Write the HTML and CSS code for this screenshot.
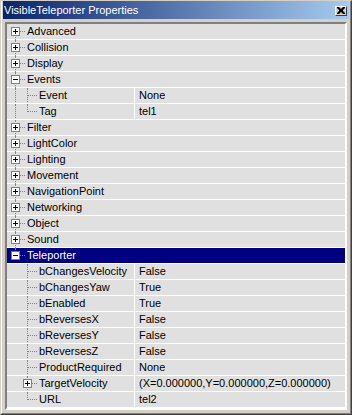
FILE: index.html
```html
<!DOCTYPE html>
<html lang="en">
<head>
    <meta charset="UTF-8">
    <title>VisibleTeleporter Properties</title>
    <link rel="stylesheet" href="styles.css">
</head>
<body>
    <div class="window">
        <div class="frame">
            <div class="titlebar">
                <span class="title">VisibleTeleporter Properties</span>
                <button class="close-btn" title="Close">
                    <svg width="8" height="7" viewBox="0 0 8 7">
                        <path d="M0 0h2l2 2 2-2h2v1l-2 2v1l2 2v1h-2l-2-2-2 2h-2v-1l2-2v-1l-2-2z" fill="#000"/>
                    </svg>
                </button>
            </div>

            <div class="props">
                <div class="row cat"><span class="node first"><i class="box plus"></i></span><span class="label">Advanced</span></div>
                <div class="row cat"><span class="node mid"><i class="box plus"></i></span><span class="label">Collision</span></div>
                <div class="row cat"><span class="node mid"><i class="box plus"></i></span><span class="label">Display</span></div>
                <div class="row cat"><span class="node mid"><i class="box"></i></span><span class="label">Events</span></div>
                <div class="row"><span class="name"><span class="seg pipe"></span><span class="node mid"></span><span class="label">Event</span></span><span class="value">None</span></div>
                <div class="row"><span class="name"><span class="seg pipe"></span><span class="node last"></span><span class="label">Tag</span></span><span class="value">tel1</span></div>
                <div class="row cat"><span class="node mid"><i class="box plus"></i></span><span class="label">Filter</span></div>
                <div class="row cat"><span class="node mid"><i class="box plus"></i></span><span class="label">LightColor</span></div>
                <div class="row cat"><span class="node mid"><i class="box plus"></i></span><span class="label">Lighting</span></div>
                <div class="row cat"><span class="node mid"><i class="box plus"></i></span><span class="label">Movement</span></div>
                <div class="row cat"><span class="node mid"><i class="box plus"></i></span><span class="label">NavigationPoint</span></div>
                <div class="row cat"><span class="node mid"><i class="box plus"></i></span><span class="label">Networking</span></div>
                <div class="row cat"><span class="node mid"><i class="box plus"></i></span><span class="label">Object</span></div>
                <div class="row cat"><span class="node mid"><i class="box plus"></i></span><span class="label">Sound</span></div>
                <div class="row cat sel"><span class="node last"><i class="box"></i></span><span class="label">Teleporter</span></div>
                <div class="row"><span class="name"><span class="seg"></span><span class="node mid"></span><span class="label">bChangesVelocity</span></span><span class="value">False</span></div>
                <div class="row"><span class="name"><span class="seg"></span><span class="node mid"></span><span class="label">bChangesYaw</span></span><span class="value">True</span></div>
                <div class="row"><span class="name"><span class="seg"></span><span class="node mid"></span><span class="label">bEnabled</span></span><span class="value">True</span></div>
                <div class="row"><span class="name"><span class="seg"></span><span class="node mid"></span><span class="label">bReversesX</span></span><span class="value">False</span></div>
                <div class="row"><span class="name"><span class="seg"></span><span class="node mid"></span><span class="label">bReversesY</span></span><span class="value">False</span></div>
                <div class="row"><span class="name"><span class="seg"></span><span class="node mid"></span><span class="label">bReversesZ</span></span><span class="value">False</span></div>
                <div class="row"><span class="name"><span class="seg"></span><span class="node mid"></span><span class="label">ProductRequired</span></span><span class="value">None</span></div>
                <div class="row"><span class="name"><span class="seg"></span><span class="node mid"><i class="box plus"></i></span><span class="label">TargetVelocity</span></span><span class="value">(X=0.000000,Y=0.000000,Z=0.000000)</span></div>
                <div class="row"><span class="name"><span class="seg"></span><span class="node last"></span><span class="label">URL</span></span><span class="value">tel2</span></div>
            </div>
        </div>
    </div>
</body>
</html>
```

FILE: styles.css
```css
:root {
    --face: #d4d0c8;
    --shadow: #808080;
    --dark: #404040;
    --row-bg: #e0e0e0;
    --line: #808080;
    --select: #000080;
}

body {
    margin: 0;
    background-color: var(--face);
    font-family: 'Liberation Sans', Arial, sans-serif;
    font-size: 11px;
}

.window {
    width: 352px;
    height: 415px;
    box-sizing: border-box;
    background-color: var(--face);
    border-top: 1px solid var(--face);
    border-left: 1px solid var(--face);
    border-right: 1px solid var(--dark);
    border-bottom: 1px solid var(--dark);
}

.frame {
    height: 100%;
    box-sizing: border-box;
    border-left: 1px solid #fff;
    border-right: 1px solid var(--shadow);
    border-bottom: 1px solid var(--shadow);
    padding: 0 1px 3px 1px;
    display: flex;
    flex-direction: column;
}

.titlebar {
    height: 18px;
    display: flex;
    align-items: center;
    justify-content: space-between;
    padding: 0 2px 0 1px;
    background: linear-gradient(to right, #0a246a, #a6caf0);
    color: #fff;
}

.title {
    line-height: 18px;
    white-space: nowrap;
}

.close-btn {
    width: 12px;
    height: 10px;
    margin-top: 1px;
    padding: 0;
    box-sizing: border-box;
    background-color: var(--face);
    border: 1px solid;
    border-color: #fff var(--dark) var(--dark) #fff;
    display: flex;
    align-items: center;
    justify-content: center;
}

.props {
    margin: 3px 2px 0 2px;
    border-style: solid;
    border-width: 2px;
    border-color: var(--shadow) #fff #fff var(--shadow);
    box-shadow: inset 1px 1px 0 var(--dark), inset -1px -1px 0 var(--face);
    padding: 0;
    flex: 1;
    background-color: var(--row-bg);
}

.row {
    display: flex;
    height: 15px;
    line-height: 15px;
    border-bottom: 1px solid #fff;
    background-color: var(--row-bg);
    color: #000;
    white-space: nowrap;
}

.row.sel {
    background-color: var(--select);
    color: #fff;
}

.name {
    display: flex;
    flex: none;
    width: 127px;
    border-right: 1px solid #fff;
    overflow: hidden;
}

.value {
    padding-left: 4px;
    overflow: hidden;
}

.label {
    padding-left: 0;
}

.seg,
.node {
    flex: none;
    position: relative;
}

.seg {
    width: 12px;
}

.node {
    width: 20px;
}

.seg.pipe::before,
.node::before {
    content: '';
    position: absolute;
    left: 8px;
    top: 0;
    bottom: -1px;
    border-left: 1px dotted var(--line);
}

.node.first::before {
    top: 7px;
}

.node.last::before {
    bottom: auto;
    height: 8px;
}

.node::after {
    content: '';
    position: absolute;
    left: 9px;
    width: 9px;
    top: 7px;
    border-top: 1px dotted var(--line);
}

.box {
    position: absolute;
    left: 4px;
    top: 3px;
    width: 9px;
    height: 9px;
    box-sizing: border-box;
    border: 1px solid var(--shadow);
    background-color: #fff;
    z-index: 1;
}

.box::before {
    content: '';
    position: absolute;
    left: 1px;
    top: 3px;
    width: 5px;
    height: 1px;
    background-color: #000;
}

.box.plus::after {
    content: '';
    position: absolute;
    left: 3px;
    top: 1px;
    width: 1px;
    height: 5px;
    background-color: #000;
}
```
